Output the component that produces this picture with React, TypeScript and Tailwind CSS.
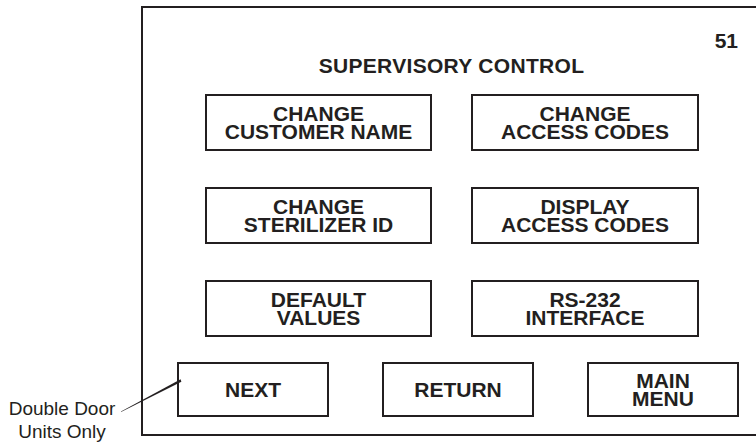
const ROWS = [
  ['CHANGE\nCUSTOMER NAME', 'CHANGE\nACCESS CODES'],
  ['CHANGE\nSTERILIZER ID', 'DISPLAY\nACCESS CODES'],
  ['DEFAULT\nVALUES', 'RS-232\nINTERFACE'],
]

const NAV = ['NEXT', 'RETURN', 'MAIN\nMENU']

function Key({ label, className }: { label: string; className: string }) {
  return (
    <div
      className={`flex items-center justify-center border-2 border-[#231f20] text-center text-[21px] leading-[18px] font-bold whitespace-pre-line ${className}`}
    >
      {label}
    </div>
  )
}

export default function App() {
  return (
    <div className="relative h-[442px] w-[756px] overflow-hidden bg-white font-['Liberation_Sans',Arial,sans-serif] text-[#231f20]">
      <div className="ml-[141px] pt-[6px]">
        <div className="flex h-[430px] w-[615px] flex-col border-2 border-r-0 border-[#231f20]">
          <div className="mt-[21px] flex justify-end pr-[18px] text-[21px] leading-[24px] font-bold">
            51
          </div>
          <div className="mt-[1px] pl-[4px] text-center text-[21px] leading-[24px] font-bold tracking-[0.3px]">
            SUPERVISORY CONTROL
          </div>
          <div className="mt-[16px] ml-[62px] grid w-[494px] grid-cols-[227px_228px] gap-x-[39px] gap-y-[36px]">
            {ROWS.flat().map((label) => (
              <Key key={label} label={label} className="h-[57px]" />
            ))}
          </div>
          <div className="mt-[25px] ml-[34px] flex gap-[53px]">
            {NAV.map((label) => (
              <Key key={label} label={label} className="h-[55px] w-[152px]" />
            ))}
          </div>
        </div>
      </div>

      {/* callout */}
      <div className="absolute top-[397px] left-[2px] w-[120px] text-center text-[19px] leading-[23px]">
        Double Door
        <br />
        Units Only
      </div>
      <svg
        className="absolute top-[370px] left-[115px]"
        width="72"
        height="48"
        viewBox="115 370 72 48"
      >
        <polygon points="121,411.4 180.6,379.2 181.4,381.8 121,412" fill="#231f20" />
      </svg>
    </div>
  )
}
